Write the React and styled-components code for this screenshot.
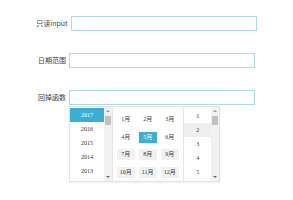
import React from "react";
import styled, { createGlobalStyle } from "styled-components";

const Global = createGlobalStyle`
  body {
    margin: 0;
    background: #fff;
    font-family: "Noto Sans CJK SC", "Noto Sans", sans-serif;
  }
`;

const Form = styled.div`
  box-sizing: border-box;
  min-height: 200px;
  padding-top: 16px;
  display: flex;
  flex-direction: column;
  gap: 22px;
`;

const Row = styled.div`
  display: flex;
  justify-content: center;
  align-items: center;
  height: 15px;
`;

const Label = styled.span`
  font-size: 7px;
  line-height: 15px;
  color: #444;
  margin-right: 3px;
  white-space: nowrap;
`;

const Field = styled.div`
  position: relative;
  width: 186px;
  height: 15px;
  line-height: 0;
`;

const Input = styled.input`
  display: block;
  box-sizing: border-box;
  width: 100%;
  height: 15px;
  margin: 0;
  padding: 0 3px;
  border: 1px solid #acdbe4;
  outline: none;
  background: #fff;
  font-size: 7px;
`;

const Dropdown = styled.div`
  position: absolute;
  z-index: 2;
  top: 16px;
  left: 0;
  width: 151px;
  height: 76px;
  box-sizing: border-box;
  border: 1px solid #e3e3e3;
  background: #fff;
  box-shadow: 0 1px 2px rgba(0, 0, 0, 0.06);
  display: flex;
  line-height: normal;
  font-family: "Liberation Serif", "Noto Sans CJK SC", serif;
  font-size: 6px;
  color: #333;
`;

const List = styled.div`
  width: ${(p) => p.$w}px;
  padding-top: ${(p) => p.$top}px;
  display: flex;
  flex-direction: column;
`;

const Item = styled.div`
  height: 14px;
  line-height: 14px;
  text-align: center;
  background: ${(p) => (p.$active ? "#3aafd6" : p.$hover ? "#eeeeee" : "transparent")};
  color: ${(p) => (p.$active ? "#fff" : "#333")};
`;

const Scroll = styled.div`
  width: 8px;
  background: #f1f1f1;
  display: flex;
  flex-direction: column;
  align-items: center;
  border-right: ${(p) => (p.$divider ? "1px solid #e6e6e6" : "none")};
`;

const Arrow = styled.div`
  width: 0;
  height: 0;
  border-left: 2px solid transparent;
  border-right: 2px solid transparent;
  ${(p) =>
    p.$down
      ? "border-top: 2px solid #666; margin-top: auto; margin-bottom: 3px;"
      : "border-bottom: 2px solid #999; margin-top: 3px;"}
`;

const Thumb = styled.div`
  width: 6px;
  height: 9px;
  margin-top: 4px;
  background: #c1c1c1;
`;

const Months = styled.div`
  width: 72px;
  box-sizing: border-box;
  padding: 7px 0 0 4px;
  display: grid;
  grid-template-columns: repeat(3, 18px);
  grid-auto-rows: 11px;
  column-gap: 4px;
  row-gap: 6.5px;
  align-content: start;
  border-right: 1px solid #e6e6e6;
`;

const Month = styled.div`
  line-height: 11px;
  text-align: center;
  background: ${(p) => (p.$active ? "#3aafd6" : p.$grey ? "#f1f1f1" : "transparent")};
  color: ${(p) => (p.$active ? "#fff" : "#333")};
`;

const years = [2017, 2016, 2015, 2014, 2013];
const days = [1, 2, 3, 4, 5];

export default function App() {
  return (
    <>
      <Global />
      <Form>
        <Row>
          <Label>只读input</Label>
          <Field>
            <Input readOnly />
          </Field>
        </Row>
        <Row>
          <Label>日期范围</Label>
          <Field>
            <Input />
          </Field>
        </Row>
        <Row>
          <Label>回掉函数</Label>
          <Field>
            <Input />
            <Dropdown>
              <List $w={34} $top={1}>
                {years.map((y, i) => (
                  <Item key={y} $active={i === 0}>
                    {y}
                  </Item>
                ))}
              </List>
              <Scroll $divider>
                <Arrow />
                <Thumb />
                <Arrow $down />
              </Scroll>
              <Months>
                {Array.from({ length: 12 }, (_, i) => (
                  <Month key={i} $active={i === 4} $grey={i >= 6}>
                    {i + 1}月
                  </Month>
                ))}
              </Months>
              <List $w={27} $top={2}>
                {days.map((d) => (
                  <Item key={d} $hover={d === 2}>
                    {d}
                  </Item>
                ))}
              </List>
              <Scroll>
                <Arrow />
                <Thumb />
                <Arrow $down />
              </Scroll>
            </Dropdown>
          </Field>
        </Row>
      </Form>
    </>
  );
}
